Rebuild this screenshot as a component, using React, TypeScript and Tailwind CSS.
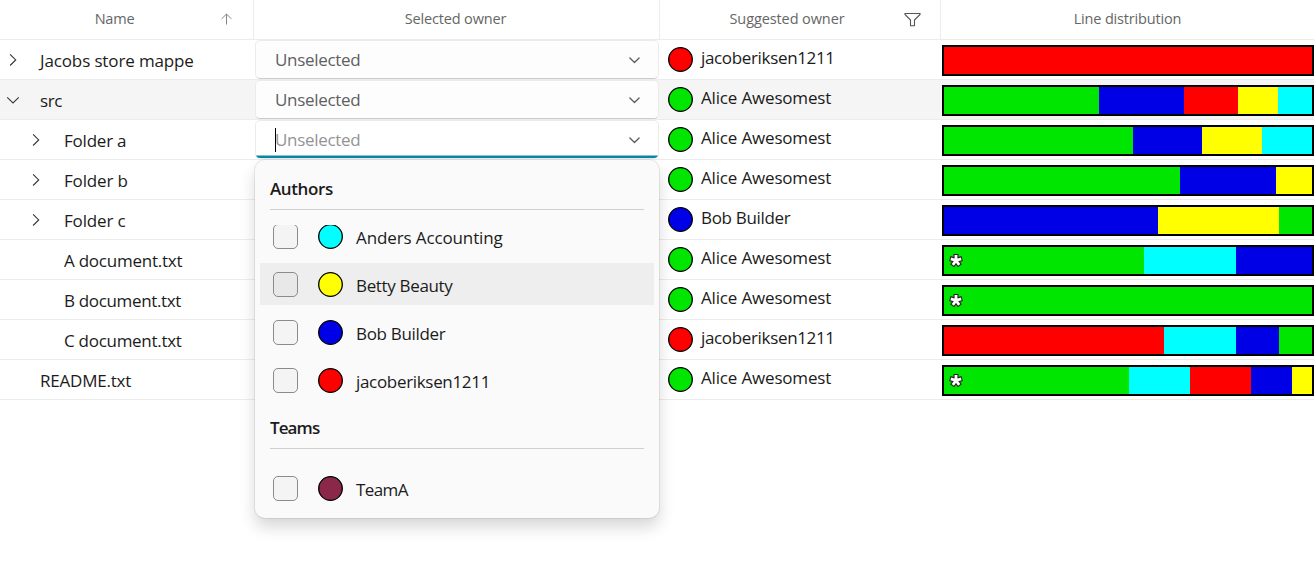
import type { ReactNode } from "react";

type Segment = { color: string; width: number };
type Row = {
  name: string;
  nameClass: string;
  level: number;
  toggle?: "open" | "closed";
  owner: string;
  ownerClass: string;
  ownerColor: string;
  segments: Segment[];
  star?: boolean;
};

const RED = "#ff0000";
const GREEN = "#00e600";
const BLUE = "#0000e6";
const YELLOW = "#ffff00";
const CYAN = "#00ffff";

const seg = (...parts: [string, number][]): Segment[] => parts.map(([color, width]) => ({ color, width }));

const alice = { owner: "Alice Awesomest", ownerClass: "tracking-[-0.17px]", ownerColor: GREEN };
const jacob = { owner: "jacoberiksen1211", ownerClass: "tracking-[-0.34px]", ownerColor: RED };
const bob = { owner: "Bob Builder", ownerClass: "tracking-[-0.32px]", ownerColor: BLUE };

const rows: Row[] = [
  { name: "Jacobs store mappe", nameClass: "tracking-[-0.13px]", level: 0, toggle: "closed", ...jacob, segments: seg([RED, 368]) },
  { name: "src", nameClass: "tracking-[-0.4px]", level: 0, toggle: "open", ...alice, segments: seg([GREEN, 155], [BLUE, 85.3], [RED, 53.4], [YELLOW, 40], [CYAN, 34.3]) },
  { name: "Folder a", nameClass: "tracking-[-0.22px]", level: 1, toggle: "closed", ...alice, segments: seg([GREEN, 188.8], [BLUE, 69.2], [YELLOW, 60], [CYAN, 50]) },
  { name: "Folder b", nameClass: "tracking-[-0.15px]", level: 1, toggle: "closed", ...alice, segments: seg([GREEN, 236.4], [BLUE, 95.8], [YELLOW, 35.8]) },
  { name: "Folder c", nameClass: "tracking-[-0.15px]", level: 1, toggle: "closed", ...bob, segments: seg([BLUE, 214.4], [YELLOW, 120.8], [GREEN, 32.8]) },
  { name: "A document.txt", nameClass: "tracking-[-0.24px]", level: 1, ...alice, segments: seg([GREEN, 199.6], [CYAN, 92], [BLUE, 76.4]), star: true },
  { name: "B document.txt", nameClass: "tracking-[-0.34px]", level: 1, ...alice, segments: seg([GREEN, 368]), star: true },
  { name: "C document.txt", nameClass: "tracking-[-0.28px]", level: 1, ...jacob, segments: seg([RED, 220.3], [CYAN, 72], [BLUE, 42.6], [GREEN, 33.1]) },
  { name: "README.txt", nameClass: "tracking-[-0.22px]", level: 0, ...alice, segments: seg([GREEN, 184.5], [CYAN, 61.2], [RED, 61.6], [BLUE, 40.7], [YELLOW, 20]), star: true },
];

function Dot({ color }: { color: string }) {
  return (
    <svg className="size-[25px] shrink-0" viewBox="0 0 25 25">
      <circle cx="12.5" cy="12.5" r="11.8" fill={color} stroke="#000" strokeWidth="1.3" />
    </svg>
  );
}

function Chevron({ open }: { open: boolean }) {
  return (
    <svg className="size-[14px]" viewBox="0 0 14 14" fill="none" stroke="#3a3a3a" strokeWidth="1.15">
      <path d={open ? "M1.2 4.300 7 9.900l5.800-5.600" : "M4.100 1.300 9.700 6.900l-5.600 5.600"} />
    </svg>
  );
}

function Select({ focused }: { focused: boolean }) {
  return (
    <div
      className={
        "relative ml-px flex h-[39px] w-[404px] items-center overflow-hidden rounded-[5px] border border-[#ebebeb] pr-[18px] pl-[19px] " +
        (focused ? "bg-white text-[#949494]" : "border-b-[#cccccc] bg-[#fdfdfd] text-[#606060]")
      }
    >
      {focused && <span className="-mr-px h-[24px] w-px bg-black" />}
      <span className="flex-1 text-[17px] leading-[36px] tracking-[-0.32px]">Unselected</span>
      <svg className="h-[12px] w-[12px]" viewBox="0 0 12 12" fill="none" stroke="#5c5c5c" strokeWidth="1.3" strokeLinecap="round" strokeLinejoin="round">
        <path d="M1.900 4 6.500 8.500 11.100 4" />
      </svg>
      {focused && <span className="absolute -right-px bottom-0 -left-px h-[3px] translate-y-px border-b-[3px] border-[#0a86a6] shadow-[0_-0.5px_0_#0a86a6]" />}
    </div>
  );
}

function Bar({ segments, star }: { segments: Segment[]; star?: boolean }) {
  return (
    <div className="relative flex h-[31px] w-[372px] border-2 border-black">
      {segments.map((s, i) => (
        <div key={i} className="h-full" style={{ width: s.width, backgroundColor: s.color }} />
      ))}
      {star && (
        <svg className="absolute top-[5px] left-[4px] size-[16px]" viewBox="0 0 16 16" strokeLinecap="butt">
          <g stroke="#222" strokeWidth="5">
            <path d="M8 8.500V2M8 8.500 1.800 6.500M8 8.500l6.200-2M8 8.500l-3.900 5.300M8 8.500l3.900 5.300" />
          </g>
          <g stroke="#fff" strokeWidth="2.800">
            <path d="M8 8.500V3M8 8.500 2.800 6.800M8 8.500l5.200-1.700M8 8.500l-3.200 4.400M8 8.500l3.200 4.400" />
          </g>
        </svg>
      )}
    </div>
  );
}

function HeaderCell({ className, children }: { className: string; children: ReactNode }) {
  return (
    <div className={"relative flex h-[39px] items-center justify-center border-[#ececec] pb-[2px] text-[14.5px] text-[#666] " + className}>
      {children}
    </div>
  );
}

function Option({ label, color, hovered, className }: { label: string; color: string; hovered?: boolean; className: string }) {
  return (
    <div className={"mx-[5px] flex h-[42px] shrink-0 items-center pl-[13px] " + (hovered ? "bg-[#eeeeee]" : "")}>
      <span className={"mr-5 size-[25px] rounded-[5px] border border-[#8b8b8b] " + (hovered ? "bg-[#e8e8e8]" : "bg-[#f4f4f4]")} />
      <Dot color={color} />
      <span className={"ml-[13px] pt-[4px] text-[17px] leading-[24px] text-[#1b1b1b] " + className}>{label}</span>
    </div>
  );
}

function SectionTitle({ children }: { children: ReactNode }) {
  return <div className="mx-[15px] shrink-0 border-b border-[#cfcfcf] text-[17px] font-semibold text-[#1b1b1b]">{children}</div>;
}

export default function App() {
  return (
    <div className="relative h-[562px] w-[1314px] overflow-hidden bg-white font-['Open_Sans','Noto_Sans',sans-serif] whitespace-nowrap text-[#1b1b1b]">
      <div className="flex border-b border-[#ececec]">
        <HeaderCell className="w-[254px] border-r pr-[24px]">
          <span className="tracking-[-0.2px]">Name</span>
          <svg className="absolute top-[13px] right-[21px] size-[12px]" viewBox="0 0 12 12" fill="none" stroke="#858585" strokeWidth="1">
            <path d="M6.500 11.500V1M1.700 5.800 6.500 1l4.800 4.800" />
          </svg>
        </HeaderCell>
        <HeaderCell className="w-[406px] border-r pr-[2px]">
          <span className="tracking-[-0.17px]">Selected owner</span>
        </HeaderCell>
        <HeaderCell className="w-[281px] border-r pr-[26px]">
          <span className="tracking-[-0.1px]">Suggested owner</span>
          <svg className="absolute top-[12px] right-[19px] h-[15px] w-[17px]" viewBox="0 0 17 15" fill="none" stroke="#555" strokeWidth="1.100">
            <path d="M1 1.500h15v1L10.500 8v5.800h-4V8L1 2.500z" />
          </svg>
        </HeaderCell>
        <HeaderCell className="w-[373px]">
          <span className="tracking-[-0.17px]">Line distribution</span>
        </HeaderCell>
      </div>

      {rows.map((row, i) => (
        <div key={row.name} className={"flex h-[40px] border-b border-[#ececec] " + (i === 1 ? "bg-[#f5f5f5]" : "")}>
          <div className={"flex w-[254px] items-center " + (row.level ? "pl-[29px]" : "pl-[6px]")}>
            <span className={"size-[14px] " + (row.level ? "mr-[21px]" : "mr-[20px]")}>
              {row.toggle && <Chevron open={row.toggle === "open"} />}
            </span>
            <span className={"pt-[3px] text-[17px] leading-[24px] " + row.nameClass}>{row.name}</span>
          </div>
          <div className="w-[406px]">{i < 3 && <Select focused={i === 2} />}</div>
          <div className="flex w-[282px] items-center pl-[8px]">
            <Dot color={row.ownerColor} />
            <span className={"-mt-[4px] ml-[8px] text-[17px] leading-[24px] " + row.ownerClass}>{row.owner}</span>
          </div>
          <div className="pt-[5px]">
            <Bar segments={row.segments} star={row.star} />
          </div>
        </div>
      ))}

      <div className="absolute top-[160px] left-[255px] flex h-[358px] w-[404px] flex-col rounded-[10px] bg-[#fafafa] shadow-[0_0_0_1px_rgba(0,0,0,0.07),0_9px_16px_rgba(0,0,0,0.16)]">
        <SectionTitle>
          <div className="h-[49px] pt-[16px] leading-[25px] tracking-[-0.4px]">Authors</div>
        </SectionTitle>
        <div className="mt-[15px] flex h-[176px] flex-col overflow-hidden">
          <div className="-mt-[10px] flex flex-col gap-[6px]">
            <Option label="Anders Accounting" color={CYAN} className="tracking-[-0.12px]" />
            <Option label="Betty Beauty" color={YELLOW} hovered className="tracking-[-0.34px]" />
            <Option label="Bob Builder" color={BLUE} className="tracking-[-0.32px]" />
            <Option label="jacoberiksen1211" color={RED} className="tracking-[-0.32px]" />
          </div>
        </div>
        <SectionTitle>
          <div className="h-[47px] pt-[14px] leading-[25px] tracking-[-0.9px]">Teams</div>
        </SectionTitle>
        <div className="mt-[18px]">
          <Option label="TeamA" color="#8b2748" className="tracking-[-0.6px]" />
        </div>
      </div>
    </div>
  );
}
